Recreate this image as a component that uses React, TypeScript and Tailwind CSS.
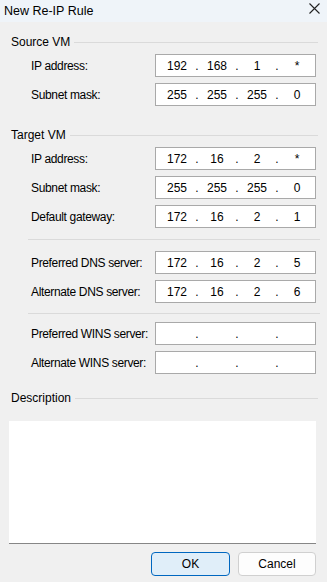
import React from "react";

type Row = { label: string; octets: string[] };

const sourceRows: Row[] = [
  { label: "IP address:", octets: ["192", "168", "1", "*"] },
  { label: "Subnet mask:", octets: ["255", "255", "255", "0"] },
];

const targetRows: Row[] = [
  { label: "IP address:", octets: ["172", "16", "2", "*"] },
  { label: "Subnet mask:", octets: ["255", "255", "255", "0"] },
  { label: "Default gateway:", octets: ["172", "16", "2", "1"] },
];

const dnsRows: Row[] = [
  { label: "Preferred DNS server:", octets: ["172", "16", "2", "5"] },
  { label: "Alternate DNS server:", octets: ["172", "16", "2", "6"] },
];

const winsRows: Row[] = [
  { label: "Preferred WINS server:", octets: ["", "", "", ""] },
  { label: "Alternate WINS server:", octets: ["", "", "", ""] },
];

const SectionHeader = ({ title, className }: { title: string; className?: string }) => (
  <div className={`flex items-center h-[16px] pl-[11px] pr-[9px] ${className ?? ""}`}>
    <span className="whitespace-nowrap">{title}</span>
    <div className="flex-1 h-px bg-[#dadada] ml-[4px]" />
  </div>
);

const IpField = ({ octets }: { octets: string[] }) => (
  <div className="flex items-center w-[161px] h-[23px] border border-[#a9a9a9] bg-white pl-[3px]">
    {octets.map((o, i) => (
      <React.Fragment key={i}>
        <span className="w-[36px] text-center">{o}</span>
        {i < 3 && <span className="w-[4px] text-center">.</span>}
      </React.Fragment>
    ))}
  </div>
);

const FieldRows = ({ rows }: { rows: Row[] }) => (
  <div className="flex flex-col gap-[6px]">
    {rows.map((r) => (
      <div key={r.label} className="flex items-center">
        <span className="w-[155px] pl-[31px] whitespace-nowrap tracking-[-0.35px]">{r.label}</span>
        <IpField octets={r.octets} />
      </div>
    ))}
  </div>
);

export default function App() {
  return (
    <div className="w-[327px] h-[582px] bg-[#f0f0f0] text-[12px] text-black font-['Liberation_Sans',Arial,sans-serif] flex flex-col overflow-hidden">
      {/* Title bar */}
      <div className="flex items-center justify-between h-[22px] bg-[#eff4f9] pl-[4px] pr-[7px]">
        <span className="text-[12.5px]">New Re-IP Rule</span>
        <svg width="11" height="11" viewBox="0 0 11 11" className="mb-[6px]">
          <path d="M0.5 0.5 L10.5 10.5 M10.5 0.5 L0.5 10.5" stroke="#222" strokeWidth="1.1" />
        </svg>
      </div>

      <SectionHeader title="Source VM" className="mt-[12px]" />
      <div className="mt-[4px]">
        <FieldRows rows={sourceRows} />
      </div>

      <SectionHeader title="Target VM" className="mt-[21px]" />
      <div className="mt-[4px]">
        <FieldRows rows={targetRows} />
      </div>

      <div className="h-px bg-[#dadada] ml-[28px] mr-[7px] mt-[11px]" />
      <div className="mt-[11px]">
        <FieldRows rows={dnsRows} />
      </div>

      <div className="h-px bg-[#dadada] ml-[28px] mr-[7px] mt-[10px]" />
      <div className="mt-[8px]">
        <FieldRows rows={winsRows} />
      </div>

      <SectionHeader title="Description" className="mt-[16px]" />
      <div className="mt-[15px] mx-[9px] w-[307px] h-[123px] bg-white border-b border-[#868686]" />

      <div className="flex justify-end gap-[8px] mt-[8px] pr-[11px]">
        <button className="w-[79px] h-[24px] rounded-[4px] border border-[#0067c0] bg-[#e0eef9]">OK</button>
        <button className="w-[78px] h-[24px] rounded-[4px] border border-[#d0d0d0] bg-[#fdfdfd]">Cancel</button>
      </div>
    </div>
  );
}
